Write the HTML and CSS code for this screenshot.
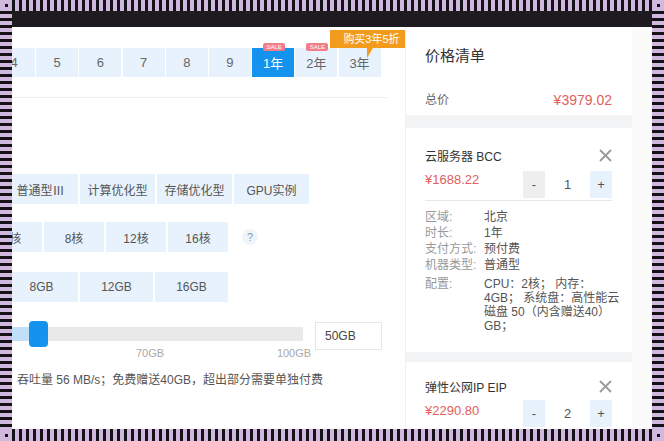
FILE: index.html
```html
<!DOCTYPE html>
<html lang="zh-CN">
<head>
<meta charset="utf-8">
<title>价格清单</title>
<link rel="stylesheet" href="styles.css">
</head>
<body>
<div class="frame">
  <div class="corner"><span class="dot"></span></div>
  <div class="band band-h"></div>
  <div class="corner"><span class="dot"></span></div>
  <div class="band band-v"></div>
  <div class="screen">
    <div class="topbar"></div>
    <div class="main">
      <div class="config">
        <div class="opts periods">
          <div class="opt">4</div>
          <div class="opt">5</div>
          <div class="opt">6</div>
          <div class="opt">7</div>
          <div class="opt">8</div>
          <div class="opt">9</div>
          <div class="opt active">1年<span class="sale">SALE</span></div>
          <div class="opt">2年<span class="sale">SALE</span></div>
          <div class="opt">3年<span class="tip">购买3年5折</span></div>
        </div>
        <div class="divider"></div>
        <div class="opts types">
          <div class="opt">普通型Ⅲ</div>
          <div class="opt">计算优化型</div>
          <div class="opt">存储优化型</div>
          <div class="opt">GPU实例</div>
        </div>
        <div class="opts cores">
          <div class="opt">4核</div>
          <div class="opt">8核</div>
          <div class="opt">12核</div>
          <div class="opt">16核</div>
          <span class="help">?</span>
        </div>
        <div class="opts mem">
          <div class="opt">8GB</div>
          <div class="opt">12GB</div>
          <div class="opt">16GB</div>
        </div>
        <div class="disk">
          <div class="slider">
            <div class="track"><div class="fill"></div></div>
            <div class="handle"></div>
            <span class="mark m70">70GB</span>
            <span class="mark m100">100GB</span>
          </div>
          <div class="disk-input">50GB</div>
        </div>
        <p class="note">吞吐量 56 MB/s；免费赠送40GB，超出部分需要单独付费</p>
      </div>
      <aside class="cart">
        <section class="card summary">
          <h2 class="cart-title">价格清单</h2>
          <div class="total"><span class="total-label">总价</span><span class="price big">¥3979.02</span></div>
        </section>
        <section class="card item">
          <div class="item-head">
            <span class="item-name">云服务器 BCC</span>
            <svg class="close" width="13" height="13" viewBox="0 0 13 13"><path d="M1 1L12 12M12 1L1 12" stroke="#9a9a9a" stroke-width="1.8" fill="none"/></svg>
          </div>
          <div class="item-price">
            <span class="price">¥1688.22</span>
            <div class="qty"><span class="minus">-</span><span class="num">1</span><span class="plus">+</span></div>
          </div>
          <dl class="specs">
            <div class="spec"><dt>区域:</dt><dd>北京</dd></div>
            <div class="spec"><dt>时长:</dt><dd>1年</dd></div>
            <div class="spec"><dt>支付方式:</dt><dd>预付费</dd></div>
            <div class="spec"><dt>机器类型:</dt><dd>普通型</dd></div>
            <div class="spec multi"><dt>配置:</dt><dd>CPU：2核； 内存：<br>4GB； 系统盘：高性能云<br>磁盘 50（内含赠送40）<br>GB；</dd></div>
          </dl>
        </section>
        <section class="card item">
          <div class="item-head">
            <span class="item-name">弹性公网IP EIP</span>
            <svg class="close" width="13" height="13" viewBox="0 0 13 13"><path d="M1 1L12 12M12 1L1 12" stroke="#9a9a9a" stroke-width="1.8" fill="none"/></svg>
          </div>
          <div class="item-price">
            <span class="price">¥2290.80</span>
            <div class="qty"><span class="minus blue">-</span><span class="num">2</span><span class="plus">+</span></div>
          </div>
        </section>
      </aside>
      <div class="edge"></div>
    </div>
  </div>
  <div class="band band-v"></div>
  <div class="corner"><span class="dot"></span></div>
  <div class="band band-h"></div>
  <div class="corner"><span class="dot"></span></div>
</div>
</body>
</html>
```

FILE: styles.css
```css
* { box-sizing: border-box; }
html, body { margin: 0; padding: 0; }
body {
  width: 664px;
  height: 441px;
  overflow: hidden;
  font-family: "Liberation Sans", "Noto Sans CJK SC", sans-serif;
  font-size: 12px;
  color: #555;
  background: #fff;
}
.frame {
  display: grid;
  grid-template-columns: 12px 640px 12px;
  grid-template-rows: 11px 418px 12px;
  width: 664px;
  height: 441px;
}
.corner {
  background: #cfb7de;
  display: flex;
  align-items: center;
  justify-content: center;
}
.dot { width: 3px; height: 3px; background: #111; }
.band-h {
  background: repeating-linear-gradient(90deg, #141216 0 3px, #cfb7de 3px 7px);
}
.band-v {
  background: repeating-linear-gradient(180deg, #141216 0 3px, #cfb7de 3px 7px);
}
.screen {
  display: flex;
  flex-direction: column;
  overflow: hidden;
  background: #fff;
}
.topbar { height: 16px; background: #1d1b20; flex: none; }
.main { display: flex; flex: 1; min-height: 0; }

/* left configurator */
.config {
  width: 393px;
  flex: none;
  overflow: hidden;
  display: flex;
  flex-direction: column;
}
.opts { display: flex; height: 30px; flex: none; }
.opt {
  position: relative;
  background: #e7f2fc;
  color: #555;
  display: flex;
  align-items: center;
  justify-content: center;
  flex: none;
  white-space: nowrap;
}
.periods { margin-top: 21px; height: 29px; margin-left: -19px; gap: 1.2px; }
.periods .opt { width: 42px; font-size: 13px; color: #666; }
.periods .opt.active { background: #1493ee; color: #fff; }
.sale {
  position: absolute;
  top: -5px;
  left: 11px;
  width: 22px;
  height: 8px;
  border-radius: 2px;
  background: #f17e86;
  color: #fff;
  font-size: 6px;
  line-height: 8px;
  text-align: center;
}
.tip {
  position: absolute;
  top: -18px;
  left: -9px;
  width: 84px;
  height: 18px;
  background: #f39b1d;
  color: #fff;
  font-size: 11px;
  line-height: 18px;
  text-align: center;
}
.tip::after {
  content: "";
  position: absolute;
  top: 18px;
  left: 37px;
  width: 0;
  height: 0;
  border-top: 10px solid #f39b1d;
  border-right: 6px solid transparent;
}
.divider { margin-top: 20px; height: 1px; width: 376px; background: #eeeeee; flex: none; }
.types { margin-top: 76px; margin-left: -9px; gap: 2px; }
.types .opt { width: 75px; }
.cores { margin-top: 18px; margin-left: -30px; gap: 2px; align-items: center; }
.cores .opt { width: 60px; height: 30px; }
.help {
  margin-left: 12px;
  width: 16px;
  height: 16px;
  border-radius: 50%;
  background: #f1f5fa;
  color: #7b9bbd;
  font-size: 11px;
  line-height: 16px;
  text-align: center;
}
.mem { margin-top: 20px; margin-left: -7px; gap: 2px; }
.mem .opt { width: 73px; }
.disk { margin-top: 19px; display: flex; align-items: flex-start; height: 29px; flex: none; }
.slider { position: relative; width: 291px; height: 29px; flex: none; }
.track {
  position: absolute;
  top: 6px;
  left: 0;
  width: 291px;
  height: 14px;
  background: #e9e9e9;
}
.fill { width: 20px; height: 14px; background: #bfe0f8; }
.handle {
  position: absolute;
  top: 0;
  left: 17px;
  width: 19px;
  height: 26px;
  border-radius: 4px;
  background: #1592ee;
}
.mark {
  position: absolute;
  top: 26px;
  font-size: 11px;
  line-height: 12px;
  color: #aaa;
  transform: translateX(-50%);
}
.m70 { left: 138px; }
.m100 { left: 282px; }
.disk-input {
  margin-left: 12px;
  margin-top: 1px;
  width: 67px;
  height: 28px;
  border: 1px solid #e6e6e6;
  padding-left: 9px;
  line-height: 26px;
  color: #444;
  font-size: 12px;
}
.note {
  margin: 22px 0 0 5px;
  line-height: 16px;
  font-size: 12px;
  color: #555;
  white-space: nowrap;
}

/* right cart */
.cart {
  width: 227px;
  flex: none;
  background: #f3f4f6;
  display: flex;
  flex-direction: column;
  border-left: 1px solid #f0f0f0;
}
.card { background: #fff; padding: 0 20px 0 19px; flex: none; }
.summary { height: 88px; padding-top: 19px; }
.cart-title { margin: 0; font-size: 15px; font-weight: normal; line-height: 20px; color: #333; }
.total {
  margin-top: 25px;
  display: flex;
  justify-content: space-between;
  align-items: center;
  line-height: 18px;
}
.total-label { color: #666; font-size: 12px; }
.price { color: #e2605d; font-size: 13px; line-height: 18px; }
.price.big { font-size: 14px; }
.item { margin-top: 13px; height: 224px; padding-top: 18px; }
.item + .item { margin-top: 10px; height: auto; flex: 1; padding-top: 15px; }
.item-head {
  display: flex;
  justify-content: space-between;
  align-items: center;
  height: 18px;
}
.item-name { color: #333; font-size: 12px; }
.item-price {
  margin-top: 7px;
  display: flex;
  justify-content: space-between;
  align-items: flex-start;
  padding-bottom: 2px;
  border-bottom: 1px solid #e8e8e8;
}
.item + .item .item-price { border-bottom: none; margin-top: 5px; }
.item + .item .price { margin-top: 2px; }
.qty { display: flex; height: 27px; width: 89px; }
.qty span { display: flex; align-items: center; justify-content: center; font-size: 13px; color: #555; }
.minus { width: 22px; background: #eeeeee; }
.minus.blue { background: #e7f2fc; }
.num { flex: 1; background: #fff; }
.plus { width: 22px; background: #e7f2fc; }
.specs { margin: 8px 0 0; padding: 0; }
.spec { display: flex; line-height: 16px; }
.spec dt { width: 59px; color: #999; flex: none; }
.spec dd { margin: 0; color: #555; white-space: nowrap; }
.spec.multi { margin-top: 4px; line-height: 14px; }
.edge { flex: 1; background: #fbfbfc; }
```
